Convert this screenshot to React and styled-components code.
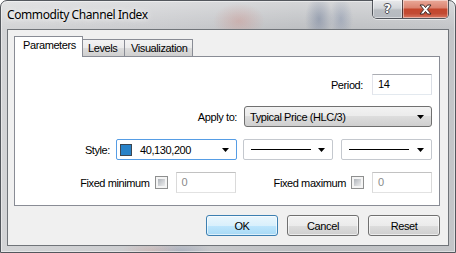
import React from 'react';
import styled, { createGlobalStyle } from 'styled-components';

const Global = createGlobalStyle`
  html, body { margin: 0; padding: 0; background: #ffffff; }
  body { width: 456px; height: 253px; overflow: hidden; }
  #root { width: 456px; height: 253px; }
`;

const UI_FONT = `"Liberation Sans", Arial, sans-serif`;

const Window = styled.div`
  box-sizing: border-box;
  width: 456px;
  height: 253px;
  border: 1px solid #53575d;
  border-radius: 7px 7px 0 0;
  padding: 0 6px 6px;
  display: flex;
  flex-direction: column;
  background:
    radial-gradient(ellipse 26px 18px at 238px 20px, rgba(205, 130, 120, 0.35), transparent),
    radial-gradient(ellipse 14px 24px at 318px 18px, rgba(70, 90, 130, 0.35), transparent),
    radial-gradient(ellipse 12px 22px at 340px 18px, rgba(90, 110, 150, 0.3), transparent),
    radial-gradient(ellipse 30px 10px at 150px 250px, rgba(200, 140, 130, 0.25), transparent),
    radial-gradient(ellipse 30px 10px at 180px 250px, rgba(90, 110, 150, 0.25), transparent),
    linear-gradient(180deg, rgba(255, 255, 255, 0.35), rgba(255, 255, 255, 0) 28px),
    linear-gradient(90deg, #d3d4d6 0%, #cacbce 35%, #bec0c3 65%, #c3c5c8 100%);
  box-shadow: inset 0 0 0 1px rgba(255, 255, 255, 0.45);
`;

const TitleBar = styled.div`
  height: 28px;
  display: flex;
  align-items: flex-start;
  flex: none;
`;

const Title = styled.div`
  font-family: "Noto Sans", "Segoe UI", sans-serif;
  font-size: 12px;
  letter-spacing: -0.4px;
  color: #000;
  padding-top: 6px;
  line-height: 16px;
  text-shadow: 0 0 8px rgba(255, 255, 255, 0.9), 0 0 4px rgba(255, 255, 255, 0.9);
`;

const Captions = styled.div`
  margin-left: auto;
  margin-top: -1px;
  display: flex;
  border: 1px solid rgba(40, 44, 52, 0.75);
  border-top: none;
  border-radius: 0 0 5px 5px;
  overflow: hidden;
  box-shadow: 0 1px 0 rgba(255, 255, 255, 0.6);
`;

const CaptionButton = styled.div`
  width: ${p => p.$w}px;
  height: 18px;
  display: flex;
  align-items: center;
  justify-content: center;
  box-sizing: border-box;
  background: ${p => p.$close
    ? 'linear-gradient(180deg, #eaa999 0%, #dc8572 42%, #c4462d 52%, #c24a33 75%, #d97862 100%)'
    : 'linear-gradient(180deg, #e9eaec 0%, #d3d6da 45%, #b9bdc2 55%, #b5b9bf 100%)'};
  box-shadow: inset 0 0 0 1px rgba(255, 255, 255, 0.45);
  & + & { border-left: 1px solid rgba(40, 44, 52, 0.75); }
`;

const HelpGlyph = styled.span`
  font-family: "DejaVu Sans", sans-serif;
  font-weight: bold;
  font-size: 12px;
  color: #fff;
  line-height: 1;
  text-shadow: 1px 0 0 #4a4e55, -1px 0 0 #4a4e55, 0 1px 0 #4a4e55, 0 -1px 0 #4a4e55;
`;

const Client = styled.div`
  flex: 1;
  background: #f0f0f0;
  border: 1px solid #707479;
  display: flex;
  flex-direction: column;
  padding: 7px 8px 0 6px;
  font-family: ${UI_FONT};
  font-size: 11px;
  letter-spacing: -0.4px;
  color: #000;
`;

const TabList = styled.div`
  display: flex;
  align-items: flex-end;
  height: 20px;
  position: relative;
  z-index: 1;
  margin-bottom: -1px;
`;

const Tab = styled.div`
  box-sizing: border-box;
  width: ${p => p.$w}px;
  height: ${p => (p.$active ? 21 : 18)}px;
  padding-left: ${p => p.$pl}px;
  border: 1px solid #898c95;
  border-bottom: ${p => (p.$active ? 'none' : '1px solid #898c95')};
  margin-left: ${p => (p.$first ? 0 : -1)}px;
  background: ${p => (p.$active
    ? '#ffffff'
    : 'linear-gradient(180deg, #f3f3f3 0%, #ebebeb 50%, #dddddd 50%, #cfcfcf 100%)')};
  line-height: ${p => (p.$active ? 17 : 16)}px;
  white-space: nowrap;
  z-index: ${p => (p.$active ? 2 : 1)};
`;

const Panel = styled.div`
  box-sizing: border-box;
  width: 426px;
  height: 150px;
  background: #ffffff;
  border: 1px solid #898c95;
  padding: 17px 7px 0 0;
  display: flex;
  flex-direction: column;
  gap: 11px;
`;

const Row = styled.div`
  display: flex;
  align-items: center;
  justify-content: flex-end;
  height: 21px;
  margin-top: ${p => p.$mt || 0}px;
`;

const Label = styled.span`
  margin-right: ${p => p.$mr}px;
  margin-left: ${p => p.$ml || 0}px;
  white-space: nowrap;
`;

const TextBox = styled.div`
  box-sizing: border-box;
  width: ${p => p.$w}px;
  height: 21px;
  border: 1px solid;
  border-color: ${p => (p.$disabled ? '#c2c2c2 #dadada #e2e2e2 #dadada' : '#abadb3 #dbdfe6 #e3e9ef #e2e3ea')};
  background: #fff;
  padding: 0 0 0 5px;
  line-height: 19px;
  color: ${p => (p.$disabled ? '#8a8a8a' : '#000')};
`;

const Arrow = () => (
  <svg width="7" height="4" viewBox="0 0 7 4" style={{ display: 'block' }}>
    <path d="M0 0H7L3.5 4Z" fill="#000" />
  </svg>
);

const Combo = styled.div`
  box-sizing: border-box;
  width: ${p => p.$w}px;
  height: 21px;
  border: 1px solid ${p => (p.$focus ? '#569de5' : p.$button ? '#707070' : '#c4c8ce')};
  border-radius: ${p => (p.$button ? 3 : 2)}px;
  background: ${p => (p.$button
    ? 'linear-gradient(180deg, #f2f2f2 0%, #ebebeb 50%, #dddddd 50%, #cfcfcf 100%)'
    : '#ffffff')};
  display: flex;
  align-items: center;
  padding: 0 7px 0 ${p => p.$pl}px;
  margin-left: ${p => p.$ml || 0}px;
  & > svg { margin-left: auto; }
`;

const Swatch = styled.span`
  box-sizing: border-box;
  width: 12px;
  height: 12px;
  background: ${p => p.$color};
  border: 1px solid #3d4650;
  margin-right: 8px;
`;

const LineSample = styled.span`
  width: 60px;
  height: 1px;
  background: #000;
`;

const CheckBox = styled.span`
  box-sizing: border-box;
  width: 13px;
  height: 13px;
  border: 1px solid #8e8f8f;
  background: #f4f4f4;
  position: relative;
  margin-right: ${p => p.$mr}px;
  &::after {
    content: '';
    position: absolute;
    inset: 2px;
    background: linear-gradient(135deg, #aeb3b9 0%, #d5d7da 60%, #ebeced 100%);
  }
`;

const ButtonRow = styled.div`
  display: flex;
  justify-content: flex-end;
  gap: 9px;
  margin-top: 9px;
`;

const Button = styled.div`
  box-sizing: border-box;
  width: 72px;
  height: 21px;
  border: 1px solid ${p => (p.$default ? '#3c7fb1' : '#707070')};
  border-radius: 3px;
  background: ${p => (p.$default
    ? 'linear-gradient(180deg, #eaf6fd 0%, #d9f0fc 50%, #bee6fd 50%, #a7d9f5 100%)'
    : 'linear-gradient(180deg, #f2f2f2 0%, #ebebeb 50%, #dddddd 50%, #cfcfcf 100%)')};
  box-shadow: inset 0 0 0 1px rgba(255, 255, 255, 0.6);
  display: flex;
  align-items: center;
  justify-content: center;
`;

export default function App() {
  return (
    <>
      <Global />
      <Window>
        <TitleBar>
          <Title>Commodity Channel Index</Title>
          <Captions>
            <CaptionButton $w={29}><HelpGlyph>?</HelpGlyph></CaptionButton>
            <CaptionButton $w={46} $close>
              <svg width="13" height="11" viewBox="0 0 13 11">
                <path d="M1 1H4.5L6.5 3.6L8.5 1H12L8.3 5.5L12 10H8.5L6.5 7.4L4.5 10H1L4.7 5.5Z"
                  fill="#fff" stroke="#3b2a28" strokeWidth="1" strokeLinejoin="round" />
              </svg>
            </CaptionButton>
          </Captions>
        </TitleBar>
        <Client>
          <TabList>
            <Tab $active $first $w={69} $pl={8}>Parameters</Tab>
            <Tab $w={43} $pl={5}>Levels</Tab>
            <Tab $w={69} $pl={6}>Visualization</Tab>
          </TabList>
          <Panel>
            <Row>
              <Label $mr={9}>Period:</Label>
              <TextBox $w={60}>14</TextBox>
            </Row>
            <Row>
              <Label $mr={7}>Apply to:</Label>
              <Combo $w={188} $button $pl={5}>Typical Price (HLC/3)<Arrow /></Combo>
            </Row>
            <Row $mt={1}>
              <Label $mr={6}>Style:</Label>
              <Combo $w={121} $focus $pl={3}>
                <Swatch $color="rgb(40,130,200)" />40,130,200<Arrow />
              </Combo>
              <Combo $w={90} $pl={7} $ml={6}><LineSample /><Arrow /></Combo>
              <Combo $w={91} $pl={7} $ml={8}><LineSample /><Arrow /></Combo>
            </Row>
            <Row $mt={1}>
              <Label $mr={5}>Fixed minimum</Label>
              <CheckBox $mr={8} />
              <TextBox $w={60} $disabled>0</TextBox>
              <Label $mr={5} $ml={38}>Fixed maximum</Label>
              <CheckBox $mr={8} />
              <TextBox $w={60} $disabled>0</TextBox>
            </Row>
          </Panel>
          <ButtonRow>
            <Button $default>OK</Button>
            <Button>Cancel</Button>
            <Button>Reset</Button>
          </ButtonRow>
        </Client>
      </Window>
    </>
  );
}
